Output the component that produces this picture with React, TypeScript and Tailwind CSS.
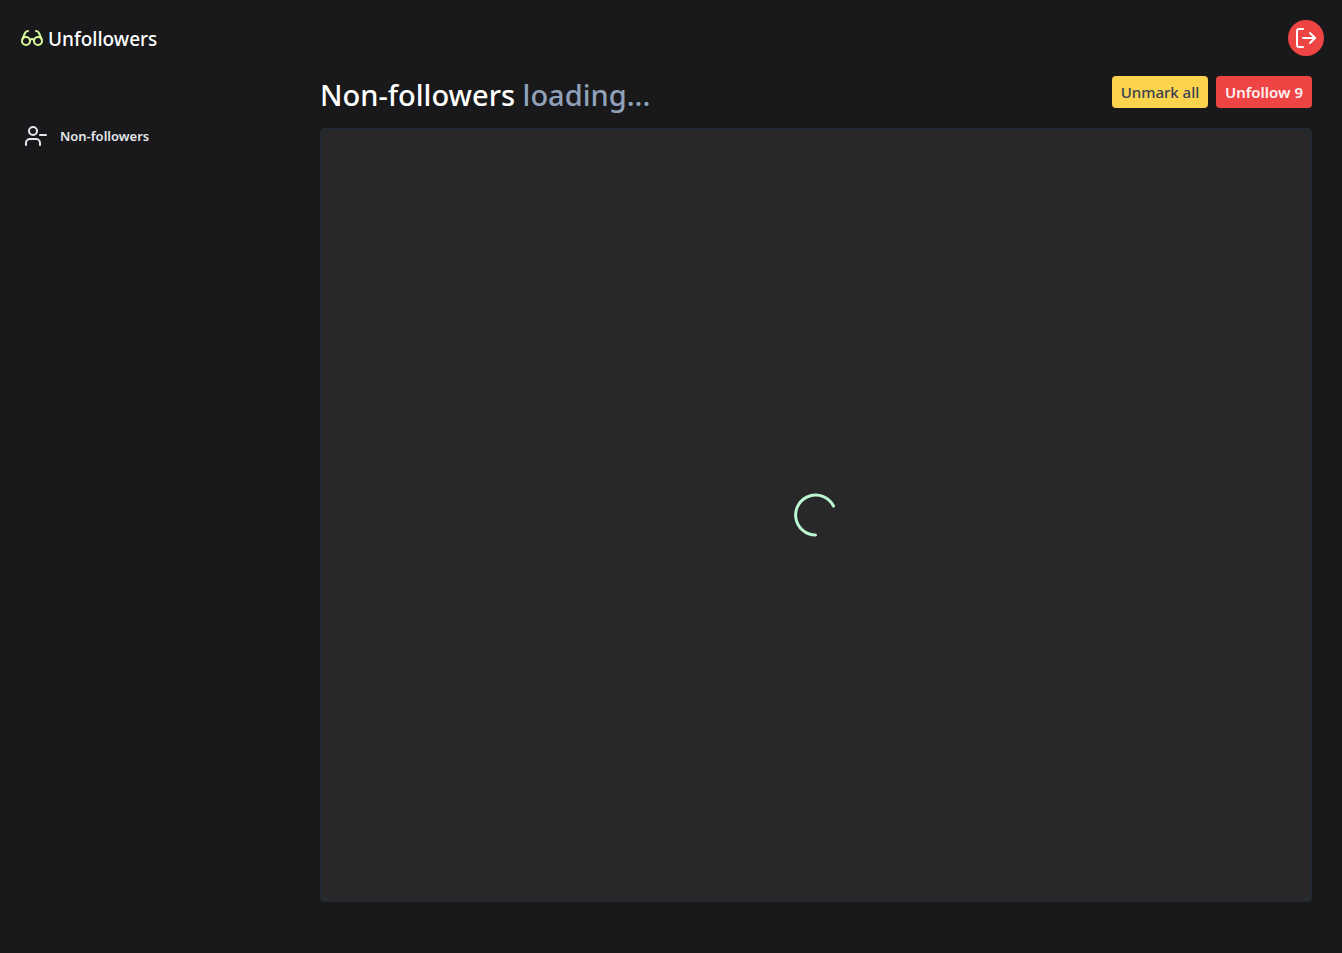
import { Glasses, LogOut, UserMinus } from "lucide-react";

function Header() {
  return (
    <header className="flex h-19 items-center justify-between pr-[18px] pl-5">
      <a href="#" className="flex items-center gap-1 text-[19px] leading-7 font-medium text-white">
        <Glasses size={24} className="text-lime-200" aria-hidden="true" />
        <span className="pt-0.5">Unfollowers</span>
      </a>
      <button
        type="button"
        aria-label="Log out"
        className="flex size-9 items-center justify-center rounded-full bg-[#ef4444] text-white"
      >
        <LogOut size={24} />
      </button>
    </header>
  );
}

function Sidebar() {
  return (
    <nav className="w-80 shrink-0 px-6 pt-12">
      <a href="#" className="flex items-center gap-3 text-[13px] leading-6 font-semibold text-gray-200">
        <UserMinus size={24} aria-hidden="true" />
        Non-followers
      </a>
    </nav>
  );
}

function Spinner() {
  return (
    <svg
      role="status"
      aria-label="Loading"
      width="48"
      height="48"
      viewBox="0 0 48 48"
      fill="none"
      stroke="#bbf7d0"
      strokeWidth="3"
      strokeLinecap="round"
    >
      <path d="M23.5 44A20 20 0 1 1 41.5 15" />
    </svg>
  );
}

export default function App() {
  return (
    <div className="flex min-h-screen flex-col bg-[#19191b] font-['Noto_Sans','Open_Sans',sans-serif]">
      <Header />
      <div className="flex flex-1">
        <Sidebar />
        <main className="flex min-w-0 flex-1 flex-col pr-[30px] pb-[51px]">
          <div className="flex h-13 items-start justify-between">
            <h1 className="text-[29px] leading-[38px] font-medium text-white">
              Non-followers <span className="text-slate-400">loading...</span>
            </h1>
            <div className="flex gap-2">
              <button type="button" className="h-8 w-24 rounded bg-[#fcd34d] text-[15px] font-medium text-gray-700">
                Unmark all
              </button>
              <button type="button" className="h-8 w-24 rounded bg-[#ef4444] text-[15px] font-semibold text-red-50">
                Unfollow 9
              </button>
            </div>
          </div>
          <section className="flex flex-1 items-center justify-center rounded border border-[#1e293b] bg-[#28282a]">
            <Spinner />
          </section>
        </main>
      </div>
    </div>
  );
}
